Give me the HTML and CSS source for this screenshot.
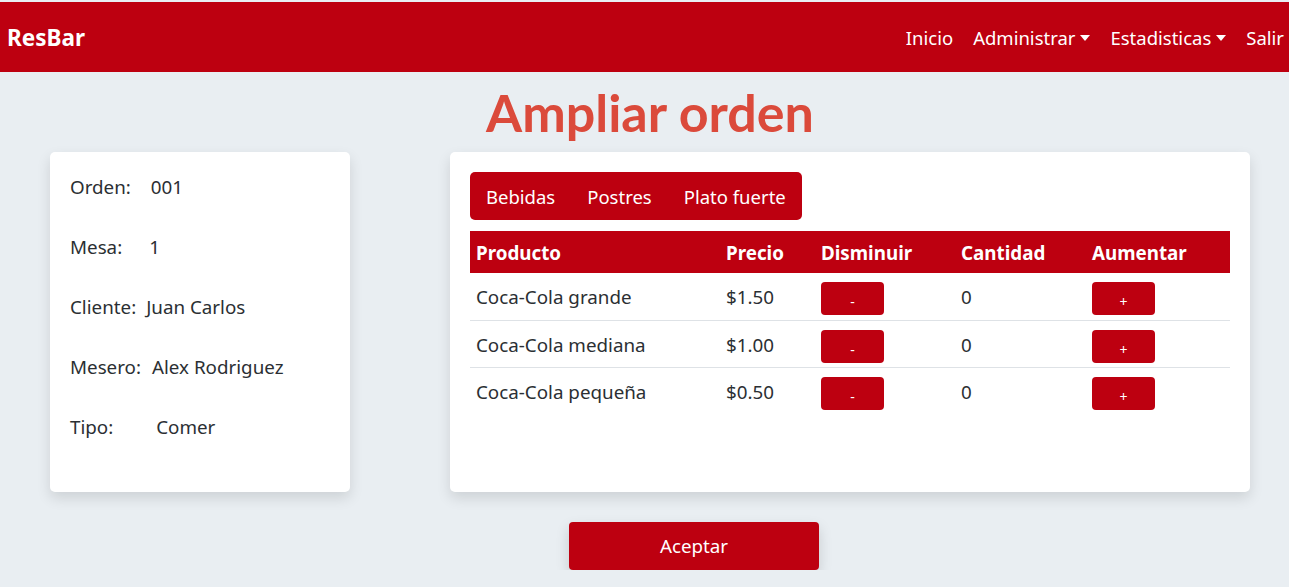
FILE: index.html
```html
<!DOCTYPE html>
<html lang="es">
<head>
    <meta charset="UTF-8">
    <meta name="viewport" content="width=device-width, initial-scale=1.0">
    <title>ResBar - Ampliar orden</title>
    <link rel="stylesheet" href="styles.css">
</head>
<body>
    <nav class="navbar">
        <a href="#" class="brand">ResBar</a>
        <ul class="nav-links">
            <li><a href="#">Inicio</a></li>
            <li><a href="#" class="dropdown">Administrar</a></li>
            <li><a href="#" class="dropdown">Estadisticas</a></li>
            <li><a href="#">Salir</a></li>
        </ul>
    </nav>

    <main class="container">
        <h1 class="page-title">Ampliar orden</h1>

        <div class="content-row">
            <!-- Datos de la orden -->
            <section class="card info-card">
                <div class="info-row"><span class="label">Orden:</span><span class="value v-orden">001</span></div>
                <div class="info-row"><span class="label">Mesa:</span><span class="value v-mesa">1</span></div>
                <div class="info-row"><span class="label">Cliente:</span><span class="value v-cliente">Juan Carlos</span></div>
                <div class="info-row"><span class="label">Mesero:</span><span class="value v-mesero">Alex Rodriguez</span></div>
                <div class="info-row"><span class="label">Tipo:</span><span class="value v-tipo">Comer</span></div>
            </section>

            <!-- Productos -->
            <section class="card products-card">
                <div class="tabs">
                    <a href="#" class="tab">Bebidas</a>
                    <a href="#" class="tab">Postres</a>
                    <a href="#" class="tab">Plato fuerte</a>
                </div>

                <table class="products-table">
                    <thead>
                        <tr>
                            <th class="col-producto">Producto</th>
                            <th class="col-precio">Precio</th>
                            <th class="col-menos">Disminuir</th>
                            <th class="col-cantidad">Cantidad</th>
                            <th class="col-mas">Aumentar</th>
                        </tr>
                    </thead>
                    <tbody>
                        <tr>
                            <td>Coca-Cola grande</td>
                            <td>$1.50</td>
                            <td><button class="qty-btn">-</button></td>
                            <td>0</td>
                            <td><button class="qty-btn">+</button></td>
                        </tr>
                        <tr>
                            <td>Coca-Cola mediana</td>
                            <td>$1.00</td>
                            <td><button class="qty-btn">-</button></td>
                            <td>0</td>
                            <td><button class="qty-btn">+</button></td>
                        </tr>
                        <tr>
                            <td>Coca-Cola pequeña</td>
                            <td>$0.50</td>
                            <td><button class="qty-btn">-</button></td>
                            <td>0</td>
                            <td><button class="qty-btn">+</button></td>
                        </tr>
                    </tbody>
                </table>
            </section>
        </div>

        <div class="actions">
            <button class="accept-btn">Aceptar</button>
        </div>
    </main>
</body>
</html>
```

FILE: styles.css
```css
* {
    margin: 0;
    padding: 0;
    box-sizing: border-box;
}

body {
    font-family: "Noto Sans", "Open Sans", sans-serif;
    background: #e9eef2;
    color: #212529;
}

/* Navbar */
.navbar {
    margin-top: 2px;
    height: 70px;
    background: #bd0010;
    display: flex;
    align-items: center;
    justify-content: space-between;
    padding: 0 5px 0 7px;
}

.brand {
    color: #fff;
    font-size: 22.5px;
    font-weight: bold;
    text-decoration: none;
}

.nav-links {
    list-style: none;
    display: flex;
    gap: 20px;
}

.nav-links a {
    color: #fff;
    text-decoration: none;
    font-size: 18.5px;
}

.dropdown::after {
    content: "";
    display: inline-block;
    margin-left: 5px;
    vertical-align: 4px;
    border-top: 6px solid #fff;
    border-left: 5px solid transparent;
    border-right: 5px solid transparent;
}

/* Main */
.container {
    width: 1200px;
    margin-left: 50px;
}

.page-title {
    text-align: center;
    font-family: Lato, sans-serif;
    font-size: 52px;
    font-weight: bold;
    color: #db4a3b;
    line-height: 80px;
}

.content-row {
    display: flex;
    gap: 100px;
}

.card {
    background: #fff;
    border-radius: 5px;
    box-shadow: 0 6px 14px rgba(0, 0, 0, 0.12);
    height: 340px;
}

.info-card {
    width: 300px;
    padding: 22px 20px;
}

.info-row {
    height: 60px;
    font-size: 18.8px;
    display: flex;
    color: #2b2f33;
}

.v-orden { margin-left: 20px; }
.v-mesa { margin-left: 27px; }
.v-cliente { margin-left: 10px; }
.v-mesero { margin-left: 11px; }
.v-tipo { margin-left: 43px; }

.products-card {
    width: 800px;
    padding: 20px;
}

/* Tabs */
.tabs {
    display: inline-flex;
    background: #bd0010;
    border-radius: 5px;
    height: 48px;
    align-items: center;
    padding: 0 16px;
    gap: 32px;
    margin-bottom: 11px;
}

.tab {
    color: #fff;
    text-decoration: none;
    font-size: 18.5px;
}

/* Table */
.products-table {
    width: 760px;
    border-collapse: collapse;
    font-size: 18.8px;
}

.products-table th {
    background: #bd0010;
    color: #fff;
    text-align: left;
    height: 42px;
    padding: 1px 6px 0;
    font-weight: bold;
}

.col-producto { width: 250px; }
.col-precio { width: 95px; }
.col-menos { width: 140px; }
.col-cantidad { width: 131px; }

.products-table td {
    height: 47px;
    padding: 11px 6px 0;
    border-bottom: 1px solid #dee2e6;
    vertical-align: top;
    color: #2b2f33;
}

.products-table tbody tr:last-child td {
    border-bottom: none;
}

.products-table td:nth-child(3),
.products-table td:nth-child(5) {
    padding-top: 9px;
}

.qty-btn {
    display: block;
    width: 63px;
    height: 33px;
    background: #bd0010;
    color: #fff;
    border: none;
    border-radius: 4px;
    font-family: inherit;
    font-size: 14px;
    padding-top: 6px;
}

/* Footer action */
.actions {
    padding: 30px 0 0 519px;
}

.accept-btn {
    width: 250px;
    height: 48px;
    background: #bd0010;
    color: #fff;
    border: none;
    border-radius: 4px;
    font-family: inherit;
    font-size: 18.8px;
    box-shadow: 0 6px 14px rgba(0, 0, 0, 0.15);
}
```
